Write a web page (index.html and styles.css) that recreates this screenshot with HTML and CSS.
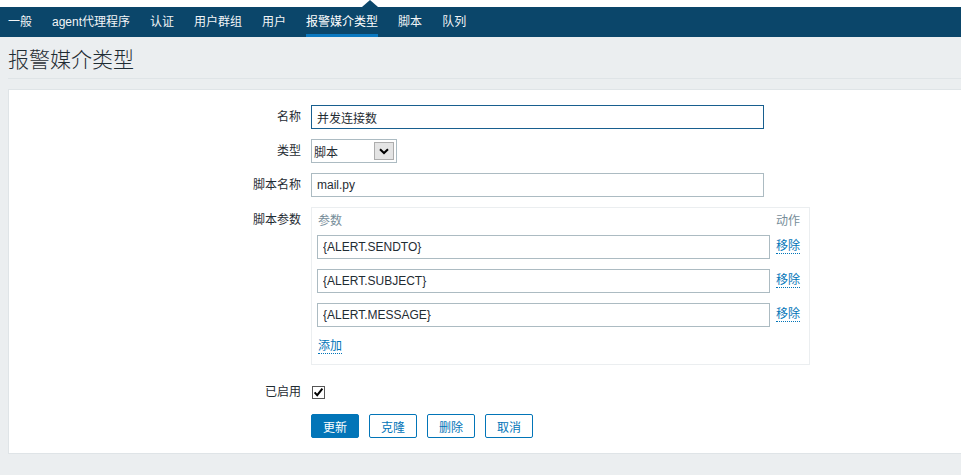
FILE: index.html
```html
<!DOCTYPE html>
<html lang="zh-CN">
<head>
<meta charset="utf-8">
<title>报警媒介类型</title>
<link rel="stylesheet" href="styles.css">
</head>
<body>
<header class="topstrip"><span class="caret"></span></header>
<nav class="subnav">
  <a href="#">一般</a>
  <a href="#">agent代理程序</a>
  <a href="#">认证</a>
  <a href="#">用户群组</a>
  <a href="#">用户</a>
  <a href="#" class="selected">报警媒介类型</a>
  <a href="#">脚本</a>
  <a href="#">队列</a>
</nav>
<main class="page">
  <div class="title-bar"><h1>报警媒介类型</h1></div>
  <section class="panel">
    <form class="form">
      <label class="lbl">名称</label>
      <div class="field"><input class="text focused" type="text" value="并发连接数"></div>

      <label class="lbl">类型</label>
      <div class="field">
        <div class="select"><span>脚本</span><span class="select-btn"><svg width="10" height="7" viewBox="0 0 10 7"><path d="M1 1.2 L5 5 L9 1.2" fill="none" stroke="#000" stroke-width="2"/></svg></span></div>
      </div>

      <label class="lbl">脚本名称</label>
      <div class="field"><input class="text" type="text" value="mail.py"></div>

      <label class="lbl lbl-top">脚本参数</label>
      <div class="field">
        <div class="params">
          <div class="th">参数</div>
          <div class="th">动作</div>

          <div class="cell"><input class="text" type="text" value="{ALERT.SENDTO}"></div>
          <div class="cell act"><a class="link" href="#">移除</a></div>

          <div class="cell"><input class="text" type="text" value="{ALERT.SUBJECT}"></div>
          <div class="cell act"><a class="link" href="#">移除</a></div>

          <div class="cell"><input class="text" type="text" value="{ALERT.MESSAGE}"></div>
          <div class="cell act"><a class="link" href="#">移除</a></div>

          <div class="add-cell"><a class="link" href="#">添加</a></div>
        </div>
      </div>

      <label class="lbl">已启用</label>
      <div class="field"><span class="checkbox"><svg width="13" height="13" viewBox="0 0 13 13"><rect x="0.5" y="0.5" width="12" height="12" fill="#fff" stroke="#555"/><path d="M2.6 6.4 L5.2 9.2 L10.4 2.6" fill="none" stroke="#000" stroke-width="2"/></svg></span></div>

      <div class="lbl"></div>
      <div class="field buttons">
        <button type="button" class="btn primary">更新</button>
        <button type="button" class="btn alt">克隆</button>
        <button type="button" class="btn alt">删除</button>
        <button type="button" class="btn alt">取消</button>
      </div>
    </form>
  </section>
</main>
</body>
</html>
```

FILE: styles.css
```css
* { box-sizing: border-box; }

html, body {
  margin: 0;
  padding: 0;
}

body {
  background: #ebeef0;
  font-family: "Liberation Sans", "Noto Sans CJK SC", sans-serif;
  font-size: 12px;
  color: #1f2c33;
  overflow: hidden;
}

.topstrip {
  height: 7px;
  background: #fff;
  position: relative;
}

.caret {
  position: absolute;
  left: 362px;
  top: 0;
  width: 0;
  height: 0;
  border-left: 8px solid transparent;
  border-right: 8px solid transparent;
  border-bottom: 7px solid #0b466a;
}

.subnav {
  display: flex;
  gap: 20px;
  height: 30px;
  padding-left: 8px;
  background: #0b466a;
}

.subnav a {
  display: block;
  height: 30px;
  line-height: 30px;
  color: #f2f5f7;
  text-decoration: none;
}

.subnav a.selected {
  color: #fff;
  box-shadow: inset 0 -3px 0 #0a78c0;
}

.page {
  padding-left: 8px;
}

.title-bar {
  padding-top: 4px;
  border-bottom: 1px solid #dfe4e7;
}

.title-bar h1 {
  margin: 0;
  font-size: 21px;
  font-weight: 300;
  line-height: 37px;
  color: #1f2c33;
}

.panel {
  margin-top: 10px;
  background: #fff;
  border: 1px solid #dfe4e7;
  border-right: 0;
  padding: 15px 0;
}

.form {
  display: grid;
  grid-template-columns: 292px 1fr;
  column-gap: 10px;
  row-gap: 10px;
}

.lbl {
  text-align: right;
  line-height: 24px;
  color: #1f2c33;
}

.lbl-top {
  padding-top: 1px;
}

.field {
  display: flex;
  align-items: center;
  min-height: 24px;
}

.text {
  width: 453px;
  height: 24px;
  border: 1px solid #acbbc2;
  padding: 0 5px;
  margin: 0;
  font-family: "Liberation Sans", "Noto Sans CJK SC", sans-serif;
  font-size: 12px;
  color: #1f2c33;
  background: #fff;
  outline: none;
}

.text.focused {
  border-color: #185f8f;
}

.select {
  width: 86px;
  height: 24px;
  border: 1px solid #acbbc2;
  display: flex;
  align-items: center;
  justify-content: space-between;
  padding: 0 2px 0 2px;
  background: #fff;
}

.select-btn {
  width: 20px;
  height: 18px;
  border: 1px solid #adadad;
  background: #e4e4e4;
  display: flex;
  align-items: center;
  justify-content: center;
}

.params {
  width: 499px;
  border: 1px solid #ebeef0;
  padding: 4px 9px 4px 5px;
  margin-bottom: 5px;
  display: grid;
  grid-template-columns: 453px 24px;
  column-gap: 6px;
}

.th {
  line-height: 18px;
  color: #768d99;
  padding-left: 1px;
}

.th + .th {
  padding-left: 0;
}

.cell {
  padding: 5px 0;
  display: flex;
  align-items: center;
}

.link {
  display: inline-block;
  line-height: 13px;
  color: #0275b8;
  text-decoration: none;
  border-bottom: 1px dotted #0275b8;
}

.add-cell {
  grid-column: 1 / span 2;
  padding: 7px 0 6px 1px;
}

.checkbox {
  display: flex;
  margin-left: 1px;
}

.buttons {
  gap: 10px;
}

.btn {
  height: 24px;
  padding: 0 11px;
  border-radius: 2px;
  border: 1px solid #0275b8;
  font-family: "Liberation Sans", "Noto Sans CJK SC", sans-serif;
  font-size: 12px;
  cursor: pointer;
  margin: 0;
}

.btn.primary {
  background: #0275b8;
  color: #fff;
}

.btn.alt {
  background: #fff;
  color: #0275b8;
}
```
